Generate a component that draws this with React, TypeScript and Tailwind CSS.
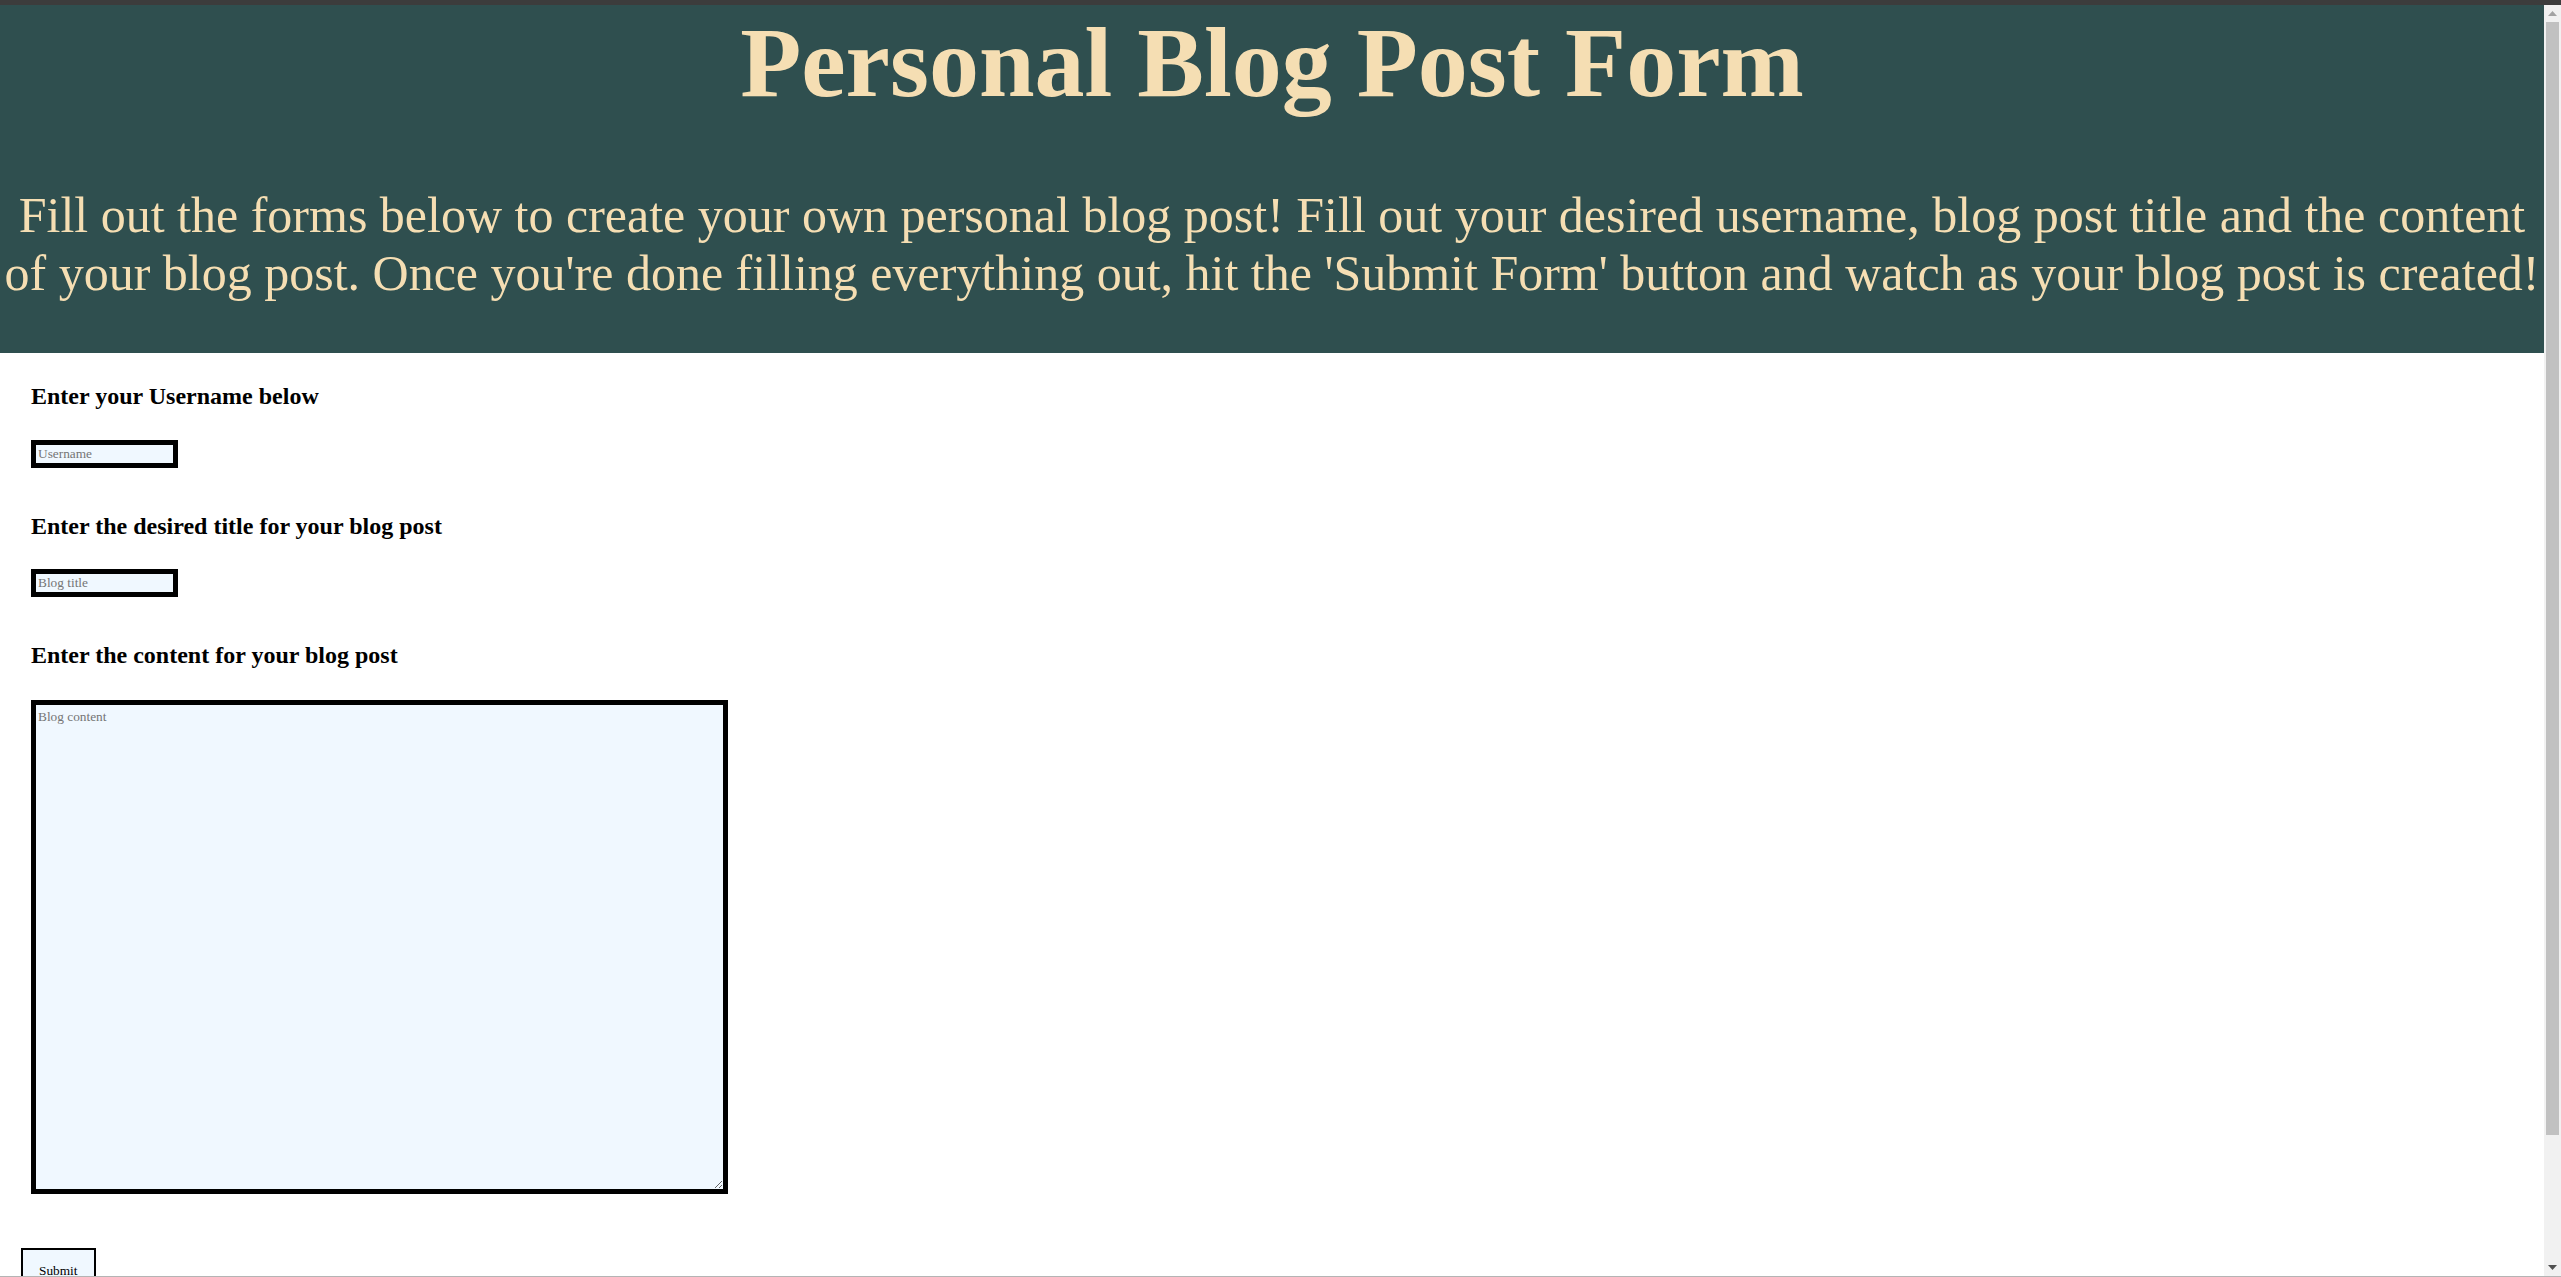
import React from "react";

const inputClass =
  "ml-[10px] mt-[29px] h-[28px] w-[147px] border-[5px] border-black bg-[#f0f8ff] px-[2px] text-[13.33px] placeholder:text-[#757575] focus:outline-none";

const App = () => {
  return (
    <div className="flex h-screen flex-col bg-white font-['Liberation_Serif',serif]">
      <div className="h-[5px] shrink-0 bg-[#3c3c3c]" />
      <div className="flex min-h-0 flex-1 border-b border-[#b4b4b4]">
        <div className="min-w-0 flex-1 overflow-hidden">
          <header className="h-[348px] bg-[#2f4f4f] text-center text-[#f5deb3]">
            <h1 className="text-[100px] font-bold leading-[1.15]">
              Personal Blog Post Form
            </h1>
            <p className="mt-[67px] text-[50px] leading-[1.15]">
              Fill out the forms below to create your own personal blog post!
              Fill out your desired username, blog post title and the content
              of your blog post. Once you're done filling everything out, hit
              the 'Submit Form' button and watch as your blog post is created!
            </p>
          </header>

          <form className="flex flex-col items-start pb-[140px] pl-[21px] text-black">
            <h2 className="ml-[10px] mt-[30px] text-[24px] font-bold leading-[1.15]">
              Enter your Username below
            </h2>
            <input type="text" placeholder="Username" className={inputClass} />

            <h2 className="ml-[10px] mt-[45px] text-[24px] font-bold leading-[1.15]">
              Enter the desired title for your blog post
            </h2>
            <input type="text" placeholder="Blog title" className={inputClass} />

            <h2 className="ml-[10px] mt-[45px] text-[24px] font-bold leading-[1.15]">
              Enter the content for your blog post
            </h2>
            <textarea
              placeholder="Blog content"
              className="ml-[10px] mt-[30px] h-[494px] w-[697px] border-[5px] border-black bg-[#f0f8ff] p-[2px] text-[13.33px] placeholder:text-[#757575] focus:outline-none"
            />

            <button
              type="submit"
              className="mt-[54px] border-2 border-black bg-[#f0f8ff] px-4 py-[13px] text-[13.33px] leading-[1.15]"
            >
              Submit
            </button>
          </form>
        </div>

        {/* window scrollbar */}
        <div className="flex w-[17px] shrink-0 flex-col bg-[#f1f1f1]">
          <div className="flex h-[17px] items-center justify-center">
            <svg width="9" height="5" viewBox="0 0 9 5">
              <path d="M0 5 L4.5 0 L9 5 Z" fill="#a3a3a3" />
            </svg>
          </div>
          <div className="flex-1">
            <div className="mx-[2px] h-[1113px] bg-[#c1c1c1]" />
          </div>
          <div className="flex h-[17px] items-center justify-center">
            <svg width="9" height="5" viewBox="0 0 9 5">
              <path d="M0 0 L9 0 L4.5 5 Z" fill="#505050" />
            </svg>
          </div>
        </div>
      </div>
    </div>
  );
};

export default App;
